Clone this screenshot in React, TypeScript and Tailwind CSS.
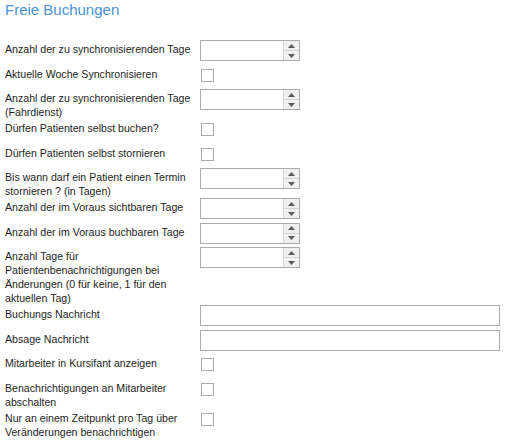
import React from 'react';

type Kind = 'number' | 'check' | 'text';

interface Row {
  label: string;
  kind: Kind;
}

const rows: Row[] = [
  { label: 'Anzahl der zu synchronisierenden Tage', kind: 'number' },
  { label: 'Aktuelle Woche Synchronisieren', kind: 'check' },
  { label: 'Anzahl der zu synchronisierenden Tage (Fahrdienst)', kind: 'number' },
  { label: 'Dürfen Patienten selbst buchen?', kind: 'check' },
  { label: 'Dürfen Patienten selbst stornieren', kind: 'check' },
  { label: 'Bis wann darf ein Patient einen Termin stornieren ? (in Tagen)', kind: 'number' },
  { label: 'Anzahl der im Voraus sichtbaren Tage', kind: 'number' },
  { label: 'Anzahl der im Voraus buchbaren Tage', kind: 'number' },
  {
    label: 'Anzahl Tage für Patientenbenachrichtigungen bei Änderungen (0 für keine, 1 für den aktuellen Tag)',
    kind: 'number',
  },
  { label: 'Buchungs Nachricht', kind: 'text' },
  { label: 'Absage Nachricht', kind: 'text' },
  { label: 'Mitarbeiter in Kursifant anzeigen', kind: 'check' },
  { label: 'Benachrichtigungen an Mitarbeiter abschalten', kind: 'check' },
  { label: 'Nur an einem Zeitpunkt pro Tag über Veränderungen benachrichtigen', kind: 'check' },
];

function Spinner() {
  return (
    <div className="flex h-[21px] w-[100px] border border-[#ababab] bg-white">
      <div className="flex-1" />
      <div className="flex w-[16px] flex-col border-l border-[#d4d4d4]">
        <div className="flex flex-1 items-center justify-center border-b border-[#d4d4d4] bg-[#f0f0f0]">
          <svg width="7" height="4" viewBox="0 0 7 4">
            <path d="M3.5 0 L7 4 L0 4 Z" fill="#5a5a5a" />
          </svg>
        </div>
        <div className="flex flex-1 items-center justify-center bg-[#f0f0f0]">
          <svg width="7" height="4" viewBox="0 0 7 4">
            <path d="M0 0 L7 0 L3.5 4 Z" fill="#5a5a5a" />
          </svg>
        </div>
      </div>
    </div>
  );
}

function Control({ kind }: { kind: Kind }) {
  if (kind === 'number') return <Spinner />;
  if (kind === 'text') return <div className="h-[21px] w-[300px] border border-[#ababab] bg-white" />;
  return (
    <div className="flex h-[21px] items-center pl-[1px]">
      <div className="h-[13px] w-[13px] border border-[#ababab] bg-white" />
    </div>
  );
}

export default function App() {
  return (
    <div
      className="min-h-[440px] w-[505px] bg-white pl-[5px] text-[#1e1e1e]"
      style={{ fontFamily: '"Liberation Sans", Arial, sans-serif' }}
    >
      <h1 className="h-[40px] pt-[1px] text-[15px] leading-[18px] font-normal text-[#4a93d6]">
        Freie Buchungen
      </h1>

      <div className="flex flex-col">
        {rows.map((row) => (
          <div key={row.label} className="flex items-start">
            <div className="w-[195px] pt-[2px] pr-[3px] text-[10.6px] leading-[14px]">{row.label}</div>
            <div className="h-[24.5px]">
              <Control kind={row.kind} />
            </div>
          </div>
        ))}
      </div>
    </div>
  );
}
